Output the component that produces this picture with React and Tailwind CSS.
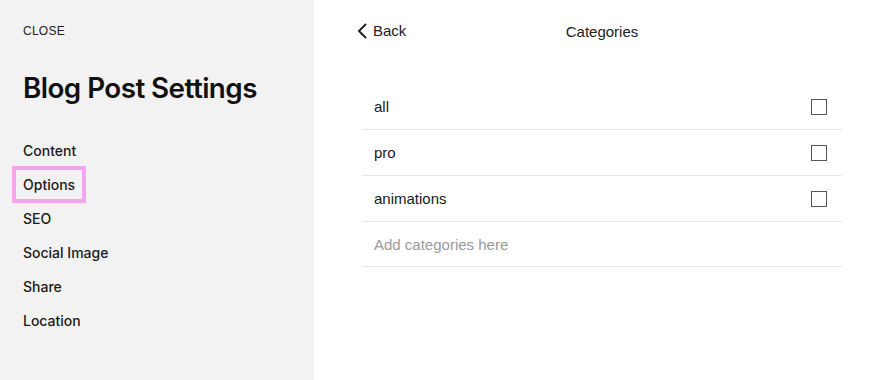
const navItems = ['Content', 'Options', 'SEO', 'Social Image', 'Share', 'Location'];
const categories = ['all', 'pro', 'animations'];

export default function App() {
    return (
        <div className="flex h-[380px] w-[881px] bg-white font-['Liberation_Sans',Arial,sans-serif] text-[#1a1a1a]">
            <aside className="w-[314px] shrink-0 bg-[#f2f2f2] pl-[23px]">
                <div className="pt-[24px] text-[12px] leading-[14px] tracking-[0.02em] text-[#222]">CLOSE</div>
                <h1 className="mt-[33px] font-['Inter',sans-serif] text-[27.8px] font-semibold leading-[34px] tracking-[-0.02em] text-[#111]">
                    Blog Post Settings
                </h1>
                <nav className="mt-[28px] flex flex-col font-['Inter',sans-serif] font-medium">
                    {navItems.map((item) => (
                        <div key={item} className="h-[34px] flex items-center text-[14px]">
                            {item === 'Options' ? (
                                <span className="-ml-[11px] border-[4px] border-[#f3a6ee] px-[7px] py-[4px]">{item}</span>
                            ) : (
                                <span>{item}</span>
                            )}
                        </div>
                    ))}
                </nav>
            </aside>

            <main className="flex-1 pl-[48px]">
                <div className="w-[480px]">
                    <div className="relative flex h-[62px] items-center justify-center">
                        <button className="absolute -left-[5px] top-[20px] flex items-center gap-[6px] text-[15px] text-[#222]">
                            <svg width="10" height="16" viewBox="0 0 10 16" fill="none" stroke="#222" strokeWidth="2" strokeLinecap="round" strokeLinejoin="round">
                                <polyline points="8.5,1.5 2,8 8.5,14.5" />
                            </svg>
                            Back
                        </button>
                        <span className="mt-[2px] text-[15px] text-[#222]">Categories</span>
                    </div>
                    <div className="mt-[22px]">
                        {categories.map((c) => (
                            <div key={c} className="flex h-[46px] items-center justify-between border-b border-[#e6e6e6] pl-[12px] pr-[15px] text-[15px]">
                                <span className="mt-[2px]">{c}</span>
                                <span className="h-[16px] w-[16px] border-[1.5px] border-[#555]" />
                            </div>
                        ))}
                        <div className="flex h-[45px] items-center border-b border-[#e6e6e6] pl-[12px] pt-[2px] text-[15px] text-[#9a9a9a]">
                            Add categories here
                        </div>
                    </div>
                </div>
            </main>
        </div>
    );
}
